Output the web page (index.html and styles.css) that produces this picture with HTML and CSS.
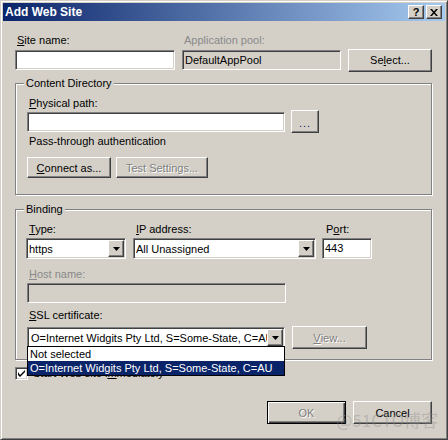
FILE: index.html
```html
<!DOCTYPE html>
<html>
<head>
<meta charset="utf-8">
<link rel="stylesheet" href="styles.css">
</head>
<body>
<div class="win">
  <div class="titlebar">
    <span class="title">Add Web Site</span>
    <div class="tbtns">
      <span class="tbtn help">?</span>
      <span class="tbtn"><svg width="8" height="7" viewBox="0 0 8 7"><path d="M0 0h2l2 2.5L6 0h2L5 3.5 8 7H6L4 4.5 2 7H0l3-3.5z" fill="#000"/></svg></span>
    </div>
  </div>
  <div class="body">
    <div class="toprow">
      <label class="lbl"><u>S</u>ite name:</label>
      <label class="lbl dis">Application pool:</label>
      <span></span>
      <div class="input"></div>
      <div class="input ro">DefaultAppPool</div>
      <div class="btn">Se<u>l</u>ect...</div>
    </div>

    <fieldset class="group">
      <legend>Content Directory</legend>
      <div class="gin cd">
        <label class="lbl"><u>P</u>hysical path:</label>
        <div class="pathrow">
          <div class="input pathin"></div>
          <div class="btn dots">...</div>
        </div>
        <div class="lbl pass">Pass-through authentication</div>
        <div class="btnrow">
          <div class="btn connect"><u>C</u>onnect as...</div>
          <div class="btn test disabled">Test Settin<u>g</u>s...</div>
        </div>
      </div>
    </fieldset>

    <fieldset class="group binding">
      <legend>Binding</legend>
      <div class="gin bd">
        <div class="bindgrid">
          <label class="lbl"><u>T</u>ype:</label>
          <label class="lbl"><u>I</u>P address:</label>
          <label class="lbl">P<u>o</u>rt:</label>
          <div class="combo"><span class="ctext">https</span><span class="arrow"><svg width="7" height="4" viewBox="0 0 7 4"><path d="M0 0h7L3.5 4z" fill="#000"/></svg></span></div>
          <div class="combo"><span class="ctext">All Unassigned</span><span class="arrow"><svg width="7" height="4" viewBox="0 0 7 4"><path d="M0 0h7L3.5 4z" fill="#000"/></svg></span></div>
          <div class="input port">443</div>
        </div>
        <label class="lbl dis host"><u>H</u>ost name:</label>
        <div class="input ro hostin"></div>
        <label class="lbl ssl"><u>S</u>SL certificate:</label>
        <div class="sslrow">
          <div class="combo sslcombo">
            <span class="ctext">O=Internet Widgits Pty Ltd, S=Some-State, C=AU</span>
            <span class="arrow"><svg width="7" height="4" viewBox="0 0 7 4"><path d="M0 0h7L3.5 4z" fill="#000"/></svg></span>
            <div class="droplist">
              <div class="opt">Not selected</div>
              <div class="opt sel">O=Internet Widgits Pty Ltd, S=Some-State, C=AU</div>
            </div>
          </div>
          <div class="btn view disabled"><u>V</u>iew...</div>
        </div>
      </div>
    </fieldset>

    <div class="checkrow">
      <span class="check"><svg width="7" height="7" viewBox="0 0 7 7"><path d="M0 2v3l2 2 5-5V0L2 5z" fill="#000"/></svg></span>
      <span class="checklbl">Start Web site i<u>m</u>mediately</span>
    </div>

    <div class="footer">
      <div class="btn ok disabled">OK</div>
      <div class="btn cancel">Cancel</div>
    </div>
  </div>
  <div class="watermark">@51CTO博客</div>
</div>
</body>
</html>
```

FILE: styles.css
```css
* { box-sizing: border-box; }
body {
  margin: 0;
  font: 11px "Liberation Sans", Arial, sans-serif;
  color: #000;
}
u { text-decoration: underline; text-underline-offset: 1px; }

.win {
  width: 448px;
  height: 440px;
  background: #d4d0c8;
  border: 1px solid;
  border-color: #d4d0c8 #404040 #404040 #d4d0c8;
  box-shadow: inset 1px 1px #fff, inset -1px -1px #808080;
  padding: 2px;
  position: relative;
  display: flex;
  flex-direction: column;
  overflow: hidden;
}

.titlebar {
  height: 18px;
  flex: none;
  background: linear-gradient(to right, #0a246a, #a6caf0);
  display: flex;
  align-items: center;
  justify-content: space-between;
  padding: 0 3px 0 2px;
}
.title { color: #fff; font-weight: bold; font-size: 12px; }
.tbtns { display: flex; gap: 2px; }
.tbtn {
  width: 16px;
  height: 14px;
  background: #d4d0c8;
  border: 1px solid;
  border-color: #fff #404040 #404040 #fff;
  box-shadow: inset -1px -1px #808080;
  display: flex;
  align-items: center;
  justify-content: center;
  font-weight: bold;
  font-size: 11px;
  line-height: 12px;
}

.body {
  flex: 1;
  padding: 13px 13px 0 12px;
  display: flex;
  flex-direction: column;
}

.lbl { display: block; line-height: 13px; padding-left: 2px; white-space: nowrap; }
.dis { color: #8a8a8a; }

.input {
  height: 20px;
  background: #fff;
  border: 1px solid;
  border-color: #808080 #fff #fff #808080;
  box-shadow: inset 1px 1px #404040, inset -1px -1px #d4d0c8;
  padding: 0 2px;
  line-height: 18px;
  white-space: nowrap;
  overflow: hidden;
}
.input.ro { background: #d4d0c8; }

.btn {
  height: 23px;
  display: flex;
  align-items: center;
  justify-content: center;
  background: #d4d0c8;
  border: 1px solid;
  border-color: #fff #404040 #404040 #fff;
  box-shadow: inset -1px -1px #808080;
  white-space: nowrap;
}
.btn.disabled { color: #808080; text-shadow: 1px 1px #fff; }

.toprow {
  display: grid;
  grid-template-columns: 160px 159px 84px;
  grid-template-rows: 13px 20px;
  column-gap: 7px;
  row-gap: 3px;
  align-items: center;
}

.group {
  margin: 7px 0 0;
  padding: 0;
  min-width: 0;
  border: 1px solid #808080;
  box-shadow: inset 1px 1px #fff, 1px 1px #fff;
}
.group legend {
  margin-left: 8px;
  padding: 0 2px;
  line-height: 13px;
  background: #d4d0c8;
}
.group.binding { margin-top: 8px; }

.gin { padding: 7px 11px 16px 11px; }

.pathrow {
  display: flex;
  align-items: center;
  gap: 6px;
  height: 23px;
}
.pathin { width: 258px; }
.dots { width: 28px; color: #1a1060; letter-spacing: 1px; padding-top: 2px; }
.pass { margin-top: 2px; }
.btnrow { display: flex; gap: 5px; margin-top: 9px; }
.btnrow .btn { height: 21px; }
.connect { width: 84px; }
.test { width: 92px; }

.gin.bd { padding: 7px 11px 10px 11px; }
.bindgrid {
  display: grid;
  grid-template-columns: 100px 183px 49px;
  grid-template-rows: 13px 21px;
  column-gap: 7px;
  row-gap: 2px;
  margin-left: -1px;
}
.bindgrid .lbl { padding-left: 3px; }
.bindgrid .input.port { height: 21px; margin-left: -1px; }

.combo {
  height: 21px;
  background: #fff;
  border: 1px solid;
  border-color: #808080 #fff #fff #808080;
  box-shadow: inset 1px 1px #404040, inset -1px -1px #d4d0c8;
  padding: 1px;
  display: flex;
  align-items: center;
  position: relative;
}
.ctext {
  flex: 1;
  min-width: 0;
  padding-left: 1px;
  white-space: nowrap;
  overflow: hidden;
}
.arrow {
  flex: none;
  width: 16px;
  height: 17px;
  background: #d4d0c8;
  border: 1px solid;
  border-color: #fff #404040 #404040 #fff;
  box-shadow: inset -1px -1px #808080;
  display: flex;
  align-items: center;
  justify-content: center;
}

.host { margin-top: 9px; }
.hostin { width: 259px; margin-top: 2px; }
.ssl { margin-top: 6px; }
.sslrow {
  display: flex;
  align-items: center;
  gap: 7px;
  height: 23px;
  margin-top: 4px;
}
.sslcombo { width: 258px; }
.sslcombo .ctext { padding-left: 2px; }
.view { width: 75px; }

.droplist {
  position: absolute;
  left: -1px;
  top: calc(100% - 1px);
  width: calc(100% + 2px);
  border: 1px solid #000;
  background: #fff;
  z-index: 2;
}
.opt {
  height: 14px;
  line-height: 14px;
  padding-left: 2px;
  white-space: nowrap;
  overflow: hidden;
}
.opt.sel { background: #0a246a; color: #fff; }

.checkrow {
  display: flex;
  align-items: center;
  margin-top: 7px;
  height: 13px;
}
.check {
  width: 13px;
  height: 13px;
  background: #fff;
  border: 1px solid;
  border-color: #808080 #fff #fff #808080;
  box-shadow: inset 1px 1px #404040, inset -1px -1px #d4d0c8;
  display: flex;
  align-items: center;
  justify-content: center;
}
.checklbl { margin-left: 5px; line-height: 13px; }

.footer {
  display: flex;
  justify-content: flex-end;
  gap: 7px;
  margin-top: 21px;
}
.footer .btn { width: 79px; }
.ok {
  border: 1px solid #000;
  box-shadow: inset 1px 1px #fff, inset -1px -1px #404040, inset -2px -2px #808080;
}

.watermark {
  position: absolute;
  right: 9px;
  bottom: 10px;
  font: 17px "Noto Sans CJK SC", "Liberation Sans", sans-serif;
  color: rgba(140, 140, 140, 0.4);
  line-height: 18px;
}
```
